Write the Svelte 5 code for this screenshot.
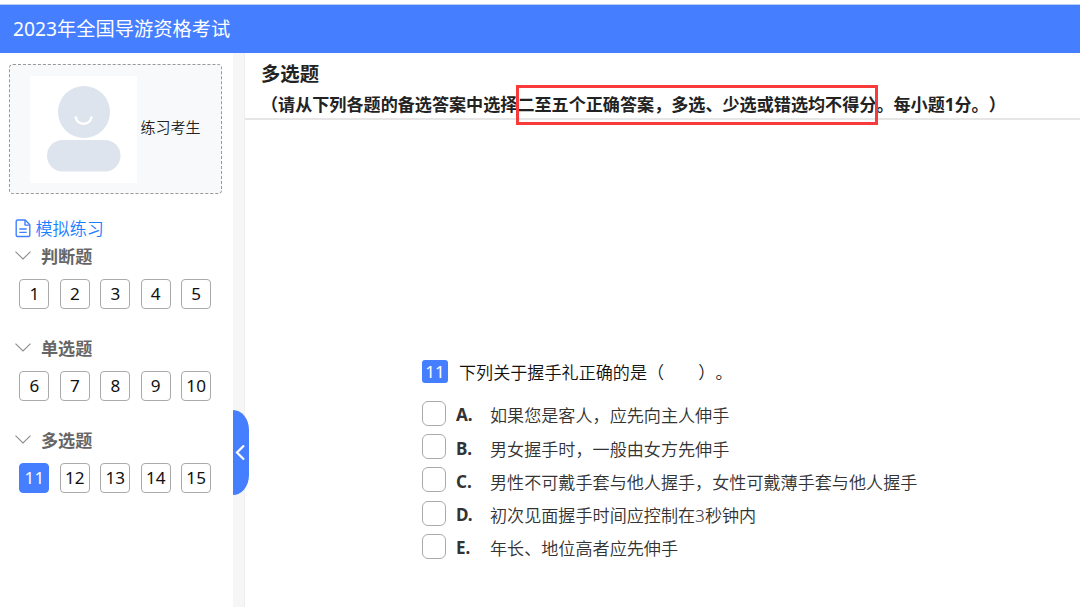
<script>
  const groups = [
    { title: '判断题', items: [1, 2, 3, 4, 5] },
    { title: '单选题', items: [6, 7, 8, 9, 10] },
    { title: '多选题', items: [11, 12, 13, 14, 15] }
  ];

  const options = [
    { key: 'A', text: '如果您是客人，应先向主人伸手' },
    { key: 'B', text: '男女握手时，一般由女方先伸手' },
    { key: 'C', text: '男性不可戴手套与他人握手，女性可戴薄手套与他人握手' },
    { key: 'D', text: '初次见面握手时间应控制在3秒钟内' },
    { key: 'E', text: '年长、地位高者应先伸手' }
  ];

  let current = $state(11);
  let checked = $state([]);
</script>

<div class="page">
  <header>2023年全国导游资格考试</header>

  <div class="body">
    <aside>
      <div class="user">
        <svg class="avatar" viewBox="0 0 107 107">
          <rect width="107" height="107" fill="#fff" />
          <circle cx="54" cy="36" r="26" fill="#dde4ee" />
          <rect x="17" y="64" width="73.5" height="31.5" rx="15.7" fill="#dde4ee" />
          <path d="M45.8 41.5a8 8 0 0 0 15.6 0" fill="none" stroke="#fff" stroke-width="2.6" stroke-linecap="round" />
        </svg>
        <span>练习考生</span>
      </div>

      <div class="paper">
        <svg width="16" height="19" viewBox="0 0 16 19" fill="none" stroke="#4080ff" stroke-width="1.4" stroke-linejoin="round">
          <path d="M2.5 1h7.7l4.6 4.8v10.4a1.3 1.3 0 0 1-1.3 1.3h-11a1.3 1.3 0 0 1-1.3-1.3V2.3A1.3 1.3 0 0 1 2.5 1z" />
          <path d="M10 1.2v4.9h4.7M4.3 10h7.4M4.3 13.4h7.4" />
        </svg>
        <span>模拟练习</span>
      </div>

      {#each groups as group}
        <section>
          <h3>
            <svg width="16" height="9" viewBox="0 0 16 9" fill="none" stroke="#8c8c8c" stroke-width="1.1">
              <path d="M.5.7 8 8 15.5.7" />
            </svg>
            {group.title}
          </h3>
          <div class="numbers">
            {#each group.items as n}
              <button class:active={n === current} onclick={() => (current = n)}>{n}</button>
            {/each}
          </div>
        </section>
      {/each}
    </aside>

    <div class="divider">
      <button class="handle" aria-label="收起">
        <svg width="10" height="16" viewBox="0 0 10 16" fill="none" stroke="#fff" stroke-width="2.2">
          <path d="M9 .5 2 7.5l7 7" />
        </svg>
      </button>
    </div>

    <main>
      <div class="intro">
        <h2>多选题</h2>
        <p>（请从下列各题的备选答案中选择<span class="mark">二至五个正确答案，多选、少选或错选均不得分</span>。每小题1分。）</p>
      </div>

      <div class="question">
        <div class="stem"><b>11</b>下列关于握手礼正确的是（&#12288;&#12288;）。</div>
        {#each options as option}
          <label>
            <input type="checkbox" value={option.key} bind:group={checked} />
            <strong>{option.key}.</strong>
            <span>{option.text}</span>
          </label>
        {/each}
      </div>
    </main>
  </div>
</div>

<style>
  :global(body) {
    margin: 0;
    overflow: hidden;
  }

  .page {
    box-sizing: border-box;
    height: 607px;
    padding-top: 4px;
    display: flex;
    flex-direction: column;
    background: #fff;
    color: #222;
    font-family: "Noto Sans", "Noto Sans CJK SC", sans-serif;
    font-size: 17.1px;
    text-spacing-trim: space-all;
    white-space: nowrap;
  }

  header {
    flex: none;
    height: 49px;
    box-sizing: border-box;
    border-top: 1px solid #b9cdf5;
    padding-left: 13px;
    background: #457eff;
    color: #fff;
    font-size: 19.25px;
    font-weight: 400;
    line-height: 48px;
  }

  .body {
    flex: 1;
    display: flex;
    min-height: 0;
  }

  aside {
    width: 233px;
    flex: none;
    box-sizing: border-box;
    padding: 11px 11px 0 9px;
  }

  .user {
    display: flex;
    align-items: center;
    gap: 3.5px;
    height: 130px;
    box-sizing: border-box;
    padding-left: 20px;
    border: 1px dashed #999;
    border-radius: 4px;
    background: #f7f9fb;
    font-size: 15px;
    font-weight: 350;
  }

  .user span {
    padding-bottom: 5px;
  }

  .avatar {
    width: 107px;
    height: 107px;
  }

  .paper {
    display: flex;
    align-items: center;
    gap: 4.5px;
    height: 24px;
    margin-top: 22px;
    padding-left: 6px;
    color: #1a80ff;
    font-weight: 350;
  }

  .paper span {
    padding-bottom: 2px;
  }

  section {
    height: 92px;
  }

  h3 {
    display: flex;
    align-items: center;
    gap: 10px;
    height: 30px;
    margin: 0;
    padding-left: 6px;
    color: #666;
    font-size: 17.1px;
  }

  .numbers {
    display: flex;
    gap: 10.45px;
    padding: 9px 0 0 10.4px;
  }

  .numbers button {
    width: 30px;
    height: 30px;
    flex: none;
    box-sizing: border-box;
    padding: 0;
    border: 1px solid #aaa;
    border-radius: 4px;
    background: #fff;
    color: #111;
    font: inherit;
    line-height: 28px;
  }

  .numbers button.active {
    border-color: #457eff;
    background: #457eff;
    color: #fff;
  }

  .divider {
    position: relative;
    width: 12px;
    flex: none;
    box-sizing: border-box;
    border-right: 1px solid #eee;
    background: #f6f6f6;
  }

  .handle {
    position: absolute;
    top: 357px;
    left: 0;
    display: flex;
    align-items: center;
    width: 16px;
    height: 85px;
    padding: 0 0 0 2px;
    border: 0;
    border-radius: 0 16px 16px 0 / 0 20px 20px 0;
    background: #457eff;
  }

  main {
    flex: 1;
    min-width: 0;
  }

  .intro {
    height: 65px;
    padding-left: 16px;
    border-bottom: 2px solid #e6e6e6;
  }

  h2 {
    margin: 0;
    padding-top: 7px;
    font-size: 19.35px;
    line-height: 28px;
  }

  p {
    margin: 0;
    font-weight: bold;
    line-height: 34px;
  }

  .mark {
    position: relative;
  }

  .mark::after {
    content: "";
    position: absolute;
    inset: -8px -2px -9px -1px;
    border: 3px solid #f93a3a;
  }

  .question {
    padding: 237px 0 0 177px;
  }

  .stem {
    display: flex;
    align-items: center;
    height: 28px;
    margin-bottom: 13.4px;
    color: #111;
    font-weight: 350;
  }

  .stem b {
    width: 26px;
    height: 23px;
    margin-right: 11px;
    border-radius: 3px;
    background: #457eff;
    color: #fff;
    font-weight: 400;
    line-height: 23px;
    text-align: center;
  }

  label {
    display: flex;
    align-items: center;
    height: 33.2px;
    color: #333;
    font-weight: 350;
  }

  input {
    appearance: none;
    box-sizing: border-box;
    width: 24px;
    height: 25px;
    margin: 0 10px 3px 0;
    border: 1px solid #aaa;
    border-radius: 6px;
    background: #fff;
  }

  input:checked {
    border-color: #457eff;
    background: #457eff;
  }

  strong {
    width: 34px;
    font-weight: 700;
  }
</style>
